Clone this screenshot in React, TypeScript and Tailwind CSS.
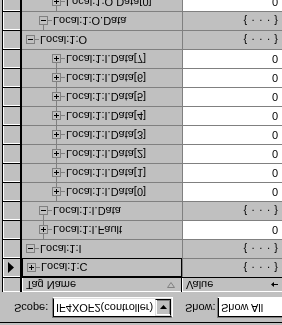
import React from "react";

type Row = {
  name: string;
  level: number;
  expanded: boolean;
  value: string;
  lineUp: boolean;
  lineDown: boolean;
  selected?: boolean;
};

const rows: Row[] = [
  { name: "Local:1:C", level: 0, expanded: false, value: "struct", lineUp: false, lineDown: false, selected: true },
  { name: "Local:1:I", level: 0, expanded: true, value: "struct", lineUp: false, lineDown: false },
  { name: "Local:1:I.Fault", level: 1, expanded: false, value: "0", lineUp: true, lineDown: true },
  { name: "Local:1:I.Data", level: 1, expanded: true, value: "struct", lineUp: true, lineDown: false },
  { name: "Local:1:I.Data[0]", level: 2, expanded: false, value: "0", lineUp: true, lineDown: true },
  { name: "Local:1:I.Data[1]", level: 2, expanded: false, value: "0", lineUp: true, lineDown: true },
  { name: "Local:1:I.Data[2]", level: 2, expanded: false, value: "0", lineUp: true, lineDown: true },
  { name: "Local:1:I.Data[3]", level: 2, expanded: false, value: "0", lineUp: true, lineDown: true },
  { name: "Local:1:I.Data[4]", level: 2, expanded: false, value: "0", lineUp: true, lineDown: true },
  { name: "Local:1:I.Data[5]", level: 2, expanded: false, value: "0", lineUp: true, lineDown: true },
  { name: "Local:1:I.Data[6]", level: 2, expanded: false, value: "0", lineUp: true, lineDown: true },
  { name: "Local:1:I.Data[7]", level: 2, expanded: false, value: "0", lineUp: true, lineDown: false },
  { name: "Local:1:O", level: 0, expanded: true, value: "struct", lineUp: false, lineDown: false },
  { name: "Local:1:O.Data", level: 1, expanded: true, value: "struct", lineUp: true, lineDown: false },
  { name: "Local:1:O.Data[0]", level: 2, expanded: false, value: "0", lineUp: true, lineDown: false },
];

const indentClass = ["pl-[4px]", "pl-[17px]", "pl-[30px]"];
const lineLeft = ["left-[8px]", "left-[21px]", "left-[34px]"];

function Expander({ expanded }: { expanded: boolean }) {
  return (
    <svg width="9" height="9" viewBox="0 0 9 9" className="block shrink-0">
      <rect x="0.5" y="0.5" width="8" height="8" fill="#c0c0c0" stroke="#808080" />
      <line x1="2" y1="4.5" x2="7" y2="4.5" stroke="#000" />
      {!expanded && <line x1="4.5" y1="2" x2="4.5" y2="7" stroke="#000" />}
    </svg>
  );
}

function RowHeaderCell({ arrow }: { arrow?: boolean }) {
  return (
    <div className="w-[22px] h-full pl-[2px] flex shrink-0">
      <div className="flex-1 h-full bg-[#c0c0c0] border-l border-black border-r-2 border-b border-r-black border-b-black shadow-[inset_1px_1px_0_#fff] flex items-center pl-[5px]">
        {arrow && (
          <svg width="6" height="11" viewBox="0 0 6 11" className="block">
            <polygon points="0,0 6,5.5 0,11" fill="#000" />
          </svg>
        )}
      </div>
    </div>
  );
}

function Dots() {
  return (
    <span className="inline-flex items-center gap-[4px]">
      <span>{"{"}</span>
      <span>·</span>
      <span>·</span>
      <span>·</span>
      <span>{"}"}</span>
    </span>
  );
}

function TagRow({ row }: { row: Row }) {
  const isStruct = row.value === "struct";
  return (
    <div className="h-[19px] flex shrink-0">
      <RowHeaderCell arrow={row.selected} />
      <div
        className={
          "relative w-[160px] h-full flex items-center border-b " +
          (row.selected ? "border border-black" : "border-[#808080]") +
          " " +
          indentClass[row.level]
        }
      >
        {row.lineUp && (
          <div className={"absolute top-0 h-[5px] w-px bg-[#808080] " + lineLeft[row.level]} />
        )}
        {row.lineDown && (
          <div className={"absolute bottom-[-1px] h-[6px] w-px bg-[#808080] " + lineLeft[row.level]} />
        )}
        <Expander expanded={row.expanded} />
        <div className="w-[4px] h-px bg-[#808080] shrink-0" />
        <span className="pl-[1px] whitespace-nowrap leading-[18px]">{row.name}</span>
      </div>
      <div
        className={
          "w-[100px] h-full flex items-center justify-end pr-[4px] border-l border-b border-[#808080] leading-[18px] " +
          (isStruct ? "bg-[#c0c0c0]" : "bg-white")
        }
      >
        {isStruct ? <Dots /> : row.value}
      </div>
    </div>
  );
}

export default function App() {
  return (
    <div className="w-[282px] h-[325px] overflow-hidden bg-[#c0c0c0] text-black text-[11px] font-['Liberation_Sans',Arial,sans-serif]">
      <div className="-scale-y-100 w-[282px] h-[325px] flex flex-col">
        {/* toolbar */}
        <div className="h-[33px] shrink-0 flex flex-col">
          <div className="h-[2px] shrink-0" />
          <div className="h-px bg-black shrink-0" />
          <div className="flex-1 flex items-start pt-[4px]">
            <span className="pl-[14px] w-[52px] leading-[21px]">Scope:</span>
            <div className="w-[121px] h-[21px] flex border-t border-l border-[#808080] border-r border-b border-r-white border-b-white">
              <div className="flex-1 flex border-t border-l border-black border-r border-b border-r-[#dfdfdf] border-b-[#dfdfdf] bg-white">
                <span className="flex-1 pl-[2px] leading-[17px] whitespace-nowrap overflow-hidden">IF4XOF2(controller)</span>
                <div className="w-[16px] h-full bg-[#c0c0c0] border-t border-l border-[#dfdfdf] border-r border-b border-r-black border-b-black shadow-[inset_1px_1px_0_#fff,inset_-1px_-1px_0_#808080] flex items-center justify-center">
                  <svg width="7" height="4" viewBox="0 0 7 4" className="block">
                    <polygon points="0,0 7,0 3.5,4" fill="#000" />
                  </svg>
                </div>
              </div>
            </div>
            <span className="pl-[12px] w-[44px] leading-[21px] whitespace-nowrap">Show:</span>
            <div className="flex-1 h-[21px] flex border-t border-l border-[#808080] border-b border-b-white">
              <div className="flex-1 flex border-t border-l border-black bg-white">
                <span className="pl-[2px] leading-[17px] whitespace-nowrap">Show All</span>
              </div>
            </div>
          </div>
        </div>
        {/* header */}
        <div className="h-[15px] shrink-0 flex">
          <RowHeaderCell />
          <div className="w-[160px] h-full flex items-center justify-between pl-[4px] pr-[6px] border-b border-r border-black shadow-[inset_1px_1px_0_#fff]">
            <span className="leading-[14px]">Tag Name</span>
            <svg width="8" height="6" viewBox="0 0 8 6" className="block">
              <polygon points="0.5,0.5 7.5,0.5 4,5.5" fill="none" stroke="#808080" />
            </svg>
          </div>
          <div className="w-[100px] h-full flex items-center justify-between pl-[4px] pr-[4px] border-b border-black shadow-[inset_1px_1px_0_#fff]">
            <span className="leading-[14px]">Value</span>
            <svg width="7" height="5" viewBox="0 0 7 5" className="block">
              <polygon points="0,2.5 3,0 3,2 7,2 7,3 3,3 3,5" fill="#000" />
            </svg>
          </div>
        </div>
        {/* rows */}
        {rows.map((r) => (
          <TagRow key={r.name} row={r} />
        ))}
      </div>
    </div>
  );
}
